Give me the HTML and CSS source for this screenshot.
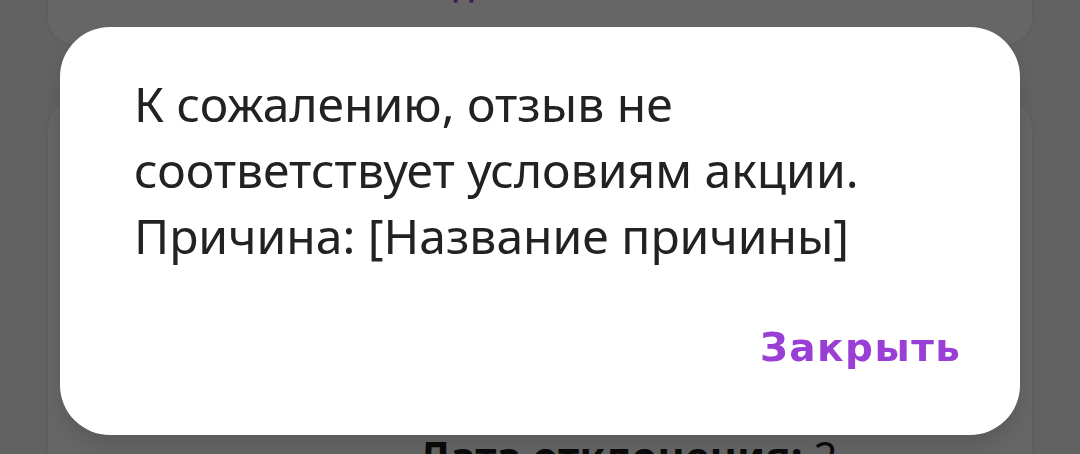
FILE: index.html
```html
<!DOCTYPE html>
<html lang="ru">
<head>
<meta charset="utf-8">
<link rel="stylesheet" href="styles.css">
</head>
<body>
<div class="page">
  <div class="card card-top">
    <span class="card-link">Подать</span>
  </div>
  <div class="card card-main">
    <div class="card-line"><b>Дата отклонения:</b> 2 мая 2024</div>
  </div>
</div>
<div class="overlay">
  <div class="dialog">
    <p class="dialog-text">К сожалению, отзыв не<br>соответствует условиям акции.<br>Причина: [Название причины]</p>
    <div class="dialog-actions">
      <span class="dialog-btn">Закрыть</span>
    </div>
  </div>
</div>
</body>
</html>
```
FILE: styles.css
```css
html, body {
  margin: 0;
  padding: 0;
}
body {
  width: 1080px;
  height: 454px;
  overflow: hidden;
  background: #f5f5f5;
  font-family: "Noto Sans", "Open Sans", sans-serif;
}
.page {
  display: flex;
  flex-direction: column;
  gap: 55px;
  padding: 0 48px;
  margin-top: -60px;
}
.card {
  background: #ffffff;
  border-radius: 28px;
  box-shadow: 0 1px 4px rgba(0, 0, 0, 0.08);
}
.card-top {
  height: 105px;
  display: flex;
  justify-content: center;
  align-items: flex-start;
  padding-right: 144px;
  box-sizing: border-box;
  overflow: hidden;
}
.card-link {
  font-family: "Noto Sans", sans-serif;
  font-size: 32px;
  line-height: 40px;
  font-weight: 600;
  color: #9a3fd6;
  margin-top: 26px;
}
.card-main {
  height: 520px;
  padding: 331px 0 0 370px;
  box-sizing: border-box;
}
.card-line {
  width: 440px;
  font-size: 42px;
  line-height: 50px;
  color: #1a1a1a;
}
.card-line b {
  font-weight: 700;
}
.overlay {
  position: fixed;
  inset: 0;
  background: rgba(0, 0, 0, 0.6);
  display: flex;
  justify-content: center;
  align-items: flex-start;
  padding-top: 27px;
}
.dialog {
  width: 960px;
  height: 408px;
  box-sizing: border-box;
  background: #ffffff;
  border-radius: 50px;
  padding: 44px 60px 0 74px;
  display: flex;
  flex-direction: column;
  box-shadow: 0 12px 24px rgba(0, 0, 0, 0.12);
}
.dialog-text {
  margin: 0;
  font-family: "Noto Sans", sans-serif;
  font-size: 48px;
  line-height: 66px;
  color: #222222;
}
.dialog-actions {
  margin-top: auto;
  display: flex;
  justify-content: flex-end;
  padding-bottom: 68px;
}
.dialog-btn {
  font-family: "DejaVu Sans", "Noto Sans", sans-serif;
  font-size: 39px;
  line-height: 38px;
  font-weight: 700;
  letter-spacing: 1.5px;
  margin-right: -1.5px;
  color: #9a3fd6;
}
```
